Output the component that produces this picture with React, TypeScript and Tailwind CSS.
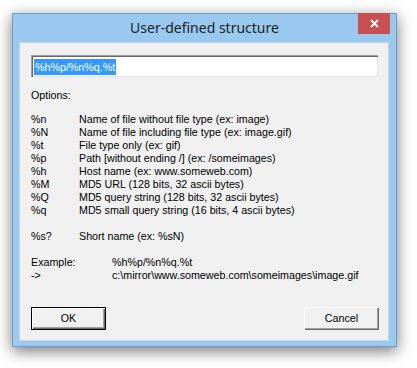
import React from "react"

const options: [string, string][] = [
    ["%n", "Name of file without file type (ex: image)"],
    ["%N", "Name of file including file type (ex: image.gif)"],
    ["%t", "File type only (ex: gif)"],
    ["%p", "Path [without ending /] (ex: /someimages)"],
    ["%h", "Host name (ex: www.someweb.com)"],
    ["%M", "MD5 URL (128 bits, 32 ascii bytes)"],
    ["%Q", "MD5 query string (128 bits, 32 ascii bytes)"],
    ["%q", "MD5 small query string (16 bits, 4 ascii bytes)"],
]

const Row = ({ k, v }: { k: string; v: string }) => (
    <div className="flex h-[13px] items-center">
        <span className="w-[48px] shrink-0">{k}</span>
        <span>{v}</span>
    </div>
)

const App = () => {
    return (
        <div className="h-[368px] w-[417px] overflow-hidden bg-white pl-[12px] pt-[13px]">
            <div className="flex h-[334px] w-[385px] flex-col border border-[#6f9bc8] bg-[#99c9ef] shadow-[0_4px_14px_rgba(0,0,0,0.55)]">
                {/* title bar */}
                <div className="relative flex h-[28px] shrink-0 items-center justify-center">
                    <span className="pb-[1px] text-[14px] text-[#222]" style={{ fontFamily: '"Noto Sans", "Open Sans", sans-serif' }}>
                        User-defined structure
                    </span>
                    <div className="absolute right-[6px] top-[-1px] flex h-[21px] w-[32px] items-center justify-center bg-[#c75050]">
                        <svg width="9" height="9" viewBox="0 0 9 9">
                            <path d="M1 1 L8 8 M8 1 L1 8" stroke="#fff" strokeWidth="1.8" />
                        </svg>
                    </div>
                </div>

                {/* client area */}
                <div
                    className="ml-[6px] flex h-[299px] w-[370px] flex-col border border-[#c3d3e4] bg-[#f0f0f0] pl-[11px] pt-[12px] text-[10.7px] leading-[13px] text-black"
                    style={{ fontFamily: '"Liberation Sans", Arial, sans-serif' }}
                >
                    <div className="flex h-[22px] w-[347px] items-center border-l border-t border-[#a0a0a0] border-b-white border-r-white bg-white shadow-[inset_1px_1px_0_#696969,inset_-1px_-1px_0_#e3e3e3]">
                        <span className="ml-[2px] bg-[#3399ff] px-[1px] leading-[16px] text-white">%h%p/%n%q.%t</span>
                    </div>

                    <div className="mt-[12px] h-[13px]">Options:</div>

                    <div className="mt-[11px] flex flex-col">
                        {options.map(([k, v]) => (
                            <Row key={k} k={k} v={v} />
                        ))}
                    </div>

                    <div className="mt-[13px]">
                        <Row k="%s?" v="Short name (ex: %sN)" />
                    </div>

                    <div className="mt-[13px] flex flex-col">
                        <div className="flex h-[13px] items-center">
                            <span className="w-[81px] shrink-0">Example:</span>
                            <span>%h%p/%n%q.%t</span>
                        </div>
                        <div className="flex h-[13px] items-center">
                            <span className="w-[81px] shrink-0">-&gt;</span>
                            <span>c:\mirror\www.someweb.com\someimages\image.gif</span>
                        </div>
                    </div>

                    <div className="mt-[25px] flex w-[347px] justify-between">
                        <button className="h-[23px] w-[75px] border border-black bg-[#f0f0f0] shadow-[inset_1px_1px_0_#fff,inset_-1px_-1px_0_#696969,inset_-2px_-2px_0_#a0a0a0]">
                            OK
                        </button>
                        <button className="mr-[-1px] h-[23px] w-[75px] bg-[#f0f0f0] shadow-[inset_1px_1px_0_#fff,inset_-1px_-1px_0_#696969,inset_-2px_-2px_0_#a0a0a0]">
                            Cancel
                        </button>
                    </div>
                </div>
            </div>
        </div>
    )
}

export default App
